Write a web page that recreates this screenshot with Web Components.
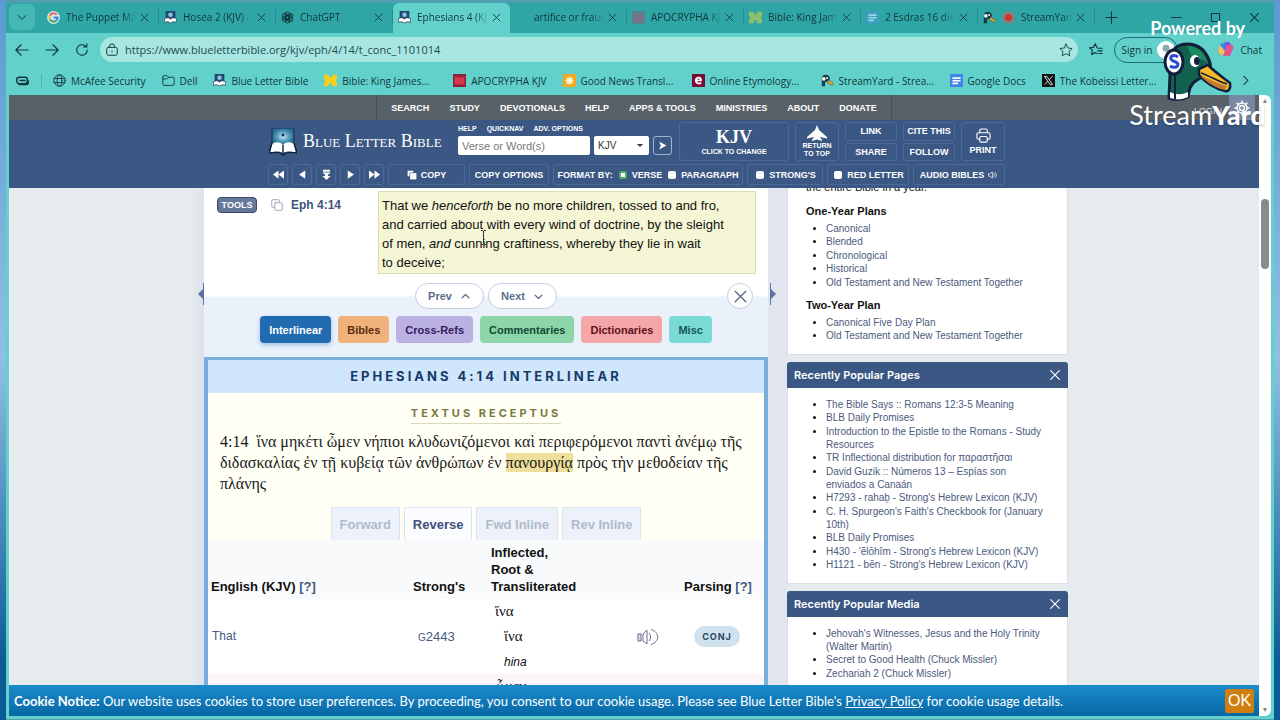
<!DOCTYPE html>
<html lang="en">
<head>
<meta charset="utf-8">
<meta name="viewport" content="width=device-width, initial-scale=1">
<title>Ephesians 4 (KJV) - Blue Letter Bible</title>
<style>
  html, body { height: 100%; margin: 0; }
  body {
    overflow: hidden;
    background: linear-gradient(#5b9ad0, #8fc0e4 50%, #0b5c96 92%);
    font-family: "Liberation Sans", Arial, sans-serif;
  }
</style>
</head>
<body>
<browser-window>
  <browser-tab slot="tabs" icon="google">The Puppet Mas</browser-tab>
  <browser-tab slot="tabs" icon="blb">Hosea 2 (KJV) - </browser-tab>
  <browser-tab slot="tabs" icon="chatgpt">ChatGPT</browser-tab>
  <browser-tab slot="tabs" icon="blb" active>Ephesians 4 (KJV)</browser-tab>
  <browser-tab slot="tabs" icon="none">artifice or fraud</browser-tab>
  <browser-tab slot="tabs" icon="apocDim">APOCRYPHA KJ</browser-tab>
  <browser-tab slot="tabs" icon="mDim">Bible: King Jame</browser-tab>
  <browser-tab slot="tabs" icon="docsDim">2 Esdras 16 disc</browser-tab>
  <browser-tab slot="tabs" icon="duck" recording>StreamYard</browser-tab>

  <bookmark-link slot="bookmarks" icon="globe">McAfee Security</bookmark-link>
  <bookmark-link slot="bookmarks" icon="folder">Dell</bookmark-link>
  <bookmark-link slot="bookmarks" icon="blb">Blue Letter Bible</bookmark-link>
  <bookmark-link slot="bookmarks" icon="m" wide>Bible: King James...</bookmark-link>
  <bookmark-link slot="bookmarks" icon="apoc">APOCRYPHA KJV</bookmark-link>
  <bookmark-link slot="bookmarks" icon="sun" wide>Good News Transl...</bookmark-link>
  <bookmark-link slot="bookmarks" icon="ety" wide>Online Etymology...</bookmark-link>
  <bookmark-link slot="bookmarks" icon="duck" wide>StreamYard - Strea...</bookmark-link>
  <bookmark-link slot="bookmarks" icon="docs">Google Docs</bookmark-link>
  <bookmark-link slot="bookmarks" icon="x" wide>The Kobeissi Letter...</bookmark-link>

  <bible-page>
    <verse-panel slot="main"></verse-panel>
    <interlinear-panel slot="main"></interlinear-panel>

    <side-card slot="side">
      <p>the entire Bible in a year.</p>
      <h4>One-Year Plans</h4>
      <ul>
        <li><a href="#">Canonical</a></li>
        <li><a href="#">Blended</a></li>
        <li><a href="#">Chronological</a></li>
        <li><a href="#">Historical</a></li>
        <li><a href="#">Old Testament and New Testament Together</a></li>
      </ul>
      <h4>Two-Year Plan</h4>
      <ul>
        <li><a href="#">Canonical Five Day Plan</a></li>
        <li><a href="#">Old Testament and New Testament Together</a></li>
      </ul>
    </side-card>
    <side-card slot="side" heading="Recently Popular Pages">
      <ul>
        <li><a href="#">The Bible Says :: Romans 12:3-5 Meaning</a></li>
        <li><a href="#">BLB Daily Promises</a></li>
        <li><a href="#">Introduction to the Epistle to the Romans - Study Resources</a></li>
        <li><a href="#">TR Inflectional distribution for παραστῆσαι</a></li>
        <li><a href="#">David Guzik :: Números 13 – Espías son enviados a Canaán</a></li>
        <li><a href="#">H7293 - rahaḇ - Strong's Hebrew Lexicon (KJV)</a></li>
        <li><a href="#">C. H. Spurgeon's Faith's Checkbook for (January 10th)</a></li>
        <li><a href="#">BLB Daily Promises</a></li>
        <li><a href="#">H430 - 'ĕlōhîm - Strong's Hebrew Lexicon (KJV)</a></li>
        <li><a href="#">H1121 - bēn - Strong's Hebrew Lexicon (KJV)</a></li>
      </ul>
    </side-card>
    <side-card slot="side" heading="Recently Popular Media">
      <ul>
        <li><a href="#">Jehovah's Witnesses, Jesus and the Holy Trinity (Walter Martin)</a></li>
        <li><a href="#">Secret to Good Health (Chuck Missler)</a></li>
        <li><a href="#">Zechariah 2 (Chuck Missler)</a></li>
      </ul>
    </side-card>
  </bible-page>
</browser-window>
<stream-badge></stream-badge>

<script>
const line = (body, w = 1.3) =>
  `<svg viewBox="0 0 16 16" fill="none" stroke="currentColor" stroke-width="${w}" stroke-linecap="round" stroke-linejoin="round">${body}</svg>`;
const fill = (body, box = "0 0 16 16") => `<svg viewBox="${box}" fill="currentColor">${body}</svg>`;

const castle = (bg, fg) => fill(`<rect width="16" height="16" fill="${bg}"/><path d="M2 3h3v2h2V3h2v2h2V3h3v10H2z" fill="${fg}"/>`);
const blockM = (c) => fill(`<path d="M0 1h5l3 4 3-4h5v5h-1v4h1v5h-6v-4H9l-1 2-1-2H6v4H0v-5h1V6H0z" fill="${c}"/>`);
const docs = (bg, fg) => fill(`<rect width="16" height="16" rx="1" fill="${bg}"/><path d="M3 4h10v2H3zM3 7.300h10v2H3zM3 10.600h7v2H3z" fill="${fg}"/>`);

const ICONS = {
  none: "",
  chevronDown: line(`<path d="M3 6l5 5 5-5"/>`),
  chevronUp: line(`<path d="M3 10l5-5 5 5"/>`, 2),
  chevronDownBold: line(`<path d="M3 6l5 5 5-5"/>`, 2),
  chevronRight: line(`<path d="M6 3l5 5-5 5"/>`),
  close: line(`<path d="M3 3l10 10M13 3L3 13"/>`),
  plus: line(`<path d="M8 1v14M1 8h14"/>`),
  minimize: line(`<path d="M2 8h12"/>`),
  maximize: line(`<rect x="3" y="3" width="10" height="10"/>`),
  back: line(`<path d="M15 8H1M7 2L1 8l6 6"/>`),
  forward: line(`<path d="M1 8h14M9 2l6 6-6 6"/>`),
  reload: line(`<path d="M14 8a6 6 0 1 1-2-4.500M13.500 1v3.500H10"/>`),
  lock: line(`<rect x="2" y="5" width="12" height="9" rx="2"/><path d="M5 5V4a3 3 0 0 1 6 0v1M8 9v1"/>`, 1.1),
  star: line(`<path d="M8 1.200l2.100 4.500 4.900.600-3.600 3.400.900 4.900L8 12.200l-4.300 2.400.900-4.900L1 6.300l4.900-.600z"/>`, 1),
  favorites: line(`<path d="M9 12l-2-1-4 2 .800-4.500L.700 5.500 5 5l2-4 2 4M10 6h5M10 9h5M11 12h4"/>`),
  sidebar: line(`<rect x="1" y="4" width="13" height="8" rx="3"/><path d="M5 8h6M4 13h9c2 0 2.500-2 2.500-4"/>`, 1.8),
  globe: line(`<circle cx="8" cy="8" r="7"/><ellipse cx="8" cy="8" rx="3" ry="7"/><path d="M1.500 5.500h13M1.500 10.500h13"/>`, 1.1),
  folder: line(`<path d="M1 3.500a1.500 1.500 0 0 1 1.500-1.500H6l2 2h5.500A1.500 1.500 0 0 1 15 5.500v7a1.500 1.500 0 0 1-1.500 1.500h-11A1.500 1.500 0 0 1 1 12.500zM1 6h5l2-2"/>`, 1.1),
  google: fill(`<circle cx="8" cy="8" r="8" fill="#cfe9ec"/><g fill="none" stroke-width="2.600"><path d="M12 4.500A5 5 0 0 0 3.500 6" stroke="#e06a5a"/><path d="M3.500 6a5 5 0 0 0 0 4" stroke="#edbd3f"/><path d="M3.500 10a5 5 0 0 0 8 1.700" stroke="#48a962"/><path d="M11.500 11.700A5 5 0 0 0 13 8H8" stroke="#4b82dc"/></g>`),
  blb: fill(`<rect x="2" y="0" width="12" height="11" fill="#1f4a73"/><circle cx="8" cy="4.500" r="2.800" fill="#8fc4dd"/><path d="M1 9c3-1 5-1 7 1 2-2 4-2 7-1l1 5c-3-1-6-1-8 1-2-2-5-2-8-1z" fill="#fff" stroke="#14263c" stroke-width=".8"/>`),
  chatgpt: line([0, 60, 120, 180, 240, 300].map((a) => `<ellipse cx="8" cy="5.500" rx="3" ry="4.500" transform="rotate(${a} 8 8)"/>`).join(""), 1.2),
  apoc: castle("#8f2038", "#d7394c"),
  apocDim: castle("#5a7f92", "#7f7088"),
  m: blockM("#f7cf1c"),
  mDim: blockM("#8ec069"),
  docs: docs("#4285e8", "#fff"),
  docsDim: docs("#3ba0bd", "#9bd6df"),
  sun: fill(`<rect width="16" height="16" rx="1" fill="#f3a91d"/><path d="M8 2l1.300 3.200L12.500 4 11.200 7 14 8.300l-2.900 1L12.400 12.500 9.300 11.200 8 14l-1.300-2.800L3.500 12.500 4.800 9.300 2 8.300 4.800 7 3.500 4l3.200 1.200z" fill="#fff6d6"/>`),
  ety: fill(`<rect width="16" height="16" rx="1" fill="#790b35"/><path d="M12.200 8.800H6.300c.300 1.600 2.700 2 4.700.900l.800 2.200c-4 2.100-8.300.300-8.300-3.900 0-6.300 9.700-6.300 8.700.800zM6.300 6.900h3.300c-.2-1.800-2.900-1.800-3.300 0z" fill="#fff"/>`),
  x: fill(`<rect width="16" height="16" fill="#101214"/><path d="M3 3h3l7 10h-3z" fill="none" stroke="#fff"/><path d="M12.500 3L9 7M3.500 13L7 9" stroke="#fff"/>`),
  duck: fill(`<path d="M1 6c0-3 2-5 5-5 3 0 4 2 5 4l-1 3-5 2v5H1z" fill="#153b45"/><circle cx="3.500" cy="6" r="2.200" fill="#fff"/><circle cx="7.500" cy="5" r="1.200" fill="#fff"/><path d="M9 7l7 5-2 2-6-3z" fill="#e4ad2c" stroke="#153b45" stroke-width=".6"/>`),
  copilot: fill(`<path d="M4 2h6l-3 11H4C1 13 0 11 1 8z" fill="#2d8ee8"/><path d="M1.500 7L3 4l5 6-2 3H4c-2.500 0-3.500-2-2.500-6z" fill="#f1c453"/><path d="M12 14H6l3-11h3c3 0 4 2 3 5z" fill="#e2568f"/><path d="M7 1h3.500c1.500 0 2 1 2.500 3H9L7.500 9z" fill="#7359e0"/>`),
  printer: line(`<path d="M4 5V2.500A1.500 1.500 0 0 1 5.500 1h5A1.500 1.500 0 0 1 12 2.500V5M4 12H2.500A1.500 1.500 0 0 1 1 10.500V7a2 2 0 0 1 2-2h10a2 2 0 0 1 2 2v3.500a1.500 1.500 0 0 1-1.500 1.500H12"/><rect x="4" y="9" width="8" height="6" rx="1.500"/>`, 1.2),
  plane: fill(`<path d="M10 0l2 5 8 7v1.500l-7-1.500 2 3v1l-5-1.500L5 16v-1l2-3-7 1.500V12l8-7z"/>`, "0 0 20 16"),
  first: fill(`<path d="M8 2v12L0 8zM16 2v12L8 8z"/>`),
  prev: fill(`<path d="M12 2v12L3 8z"/>`),
  down2: fill(`<path d="M3 1h10v3H3z"/><path d="M2 5h12L8 10z"/><path d="M6 8h4v2h4l-6 6-6-6h4z"/>`),
  next: fill(`<path d="M4 2v12l9-6z"/>`),
  last: fill(`<path d="M0 2v12l8-6zM8 2v12l8-6z"/>`),
  copySolid: fill(`<path d="M1 1h9v3H4v6H1z"/><path d="M5 5h10v10H5z"/>`),
  copy: line(`<path d="M4 11H2a1 1 0 0 1-1-1V2a1 1 0 0 1 1-1h8a1 1 0 0 1 1 1v2"/><rect x="5" y="5" width="10" height="10" rx="1"/>`, 1.1),
  go: fill(`<path d="M2 1l13 7-13 7 3-7z"/>`),
  sound: line(`<path d="M1 6v4h2l4 3V3L3 6zM9 5.500c1.500 1.500 1.500 3.500 0 5M11.500 3.500c2.500 2.500 2.500 6.500 0 9"/>`, 1.1),
  speaker: `<svg viewBox="0 0 22 18" fill="none" stroke="#6d6f8c"><rect x="1" y="6" width="3" height="7" fill="#dfe0ea"/><path d="M6 6l4-4v14l-4-3zM12 5c2 2.500 2 5.500 0 8M14 1.500c9 3 9 12 0 15"/></svg>`,
  gear: line(`<circle cx="8" cy="8" r="2.500"/><circle cx="8" cy="8" r="5"/><path d="M8 1v2M8 13v2M1 8h2M13 8h2M3 3l1.500 1.500M11.500 11.500L13 13M13 3l-1.500 1.500M4.500 11.500L3 13"/>`, 1.4),
  book: `<svg viewBox="0 0 28 28"><defs><radialGradient id="sky"><stop offset="0" stop-color="#cdeaf0"/><stop offset=".5" stop-color="#5ea3c3"/><stop offset="1" stop-color="#2b6a92"/></radialGradient></defs><rect x="3" y="0" width="22" height="17" fill="url(#sky)" stroke="#14304f"/><circle cx="14" cy="7" r="1.500" fill="#17304c"/><path d="M3 16c4-3 9-2 11 1 2-3 7-4 11-1l2 9c-5-2-10-2-13 0-3-2-8-2-13 0z" fill="#fff"/><path d="M3 15L0 25c5-1 11-1 14 2 3-3 9-3 14-2l-3-10M14 17v8" fill="none" stroke="#0f2138" stroke-width="1.400"/></svg>`,
};

class UiIcon extends HTMLElement {
  constructor() {
    super();
    this.attachShadow({ mode: "open" });
  }

  connectedCallback() {
    this.shadowRoot.innerHTML = `
      <style>
        :host { display: block; flex: none; width: 13px; height: 13px; }
        svg { display: block; width: 100%; height: 100%; }
      </style>
      ${ICONS[this.getAttribute("name")] || ""}
    `;
  }
}

class BrowserTab extends HTMLElement {
  constructor() {
    super();
    this.attachShadow({ mode: "open" });
  }

  connectedCallback() {
    this.shadowRoot.innerHTML = `
      <style>
        :host {
          display: flex;
          align-items: center;
          gap: 6px;
          flex: 0 1 117px;
          min-width: 0;
          box-sizing: border-box;
          padding: 0 8px 0 5px;
          border-right: 1px solid #228c8f;
          margin: 6px 0 8px;
        }
        :host([active]) {
          margin: 0;
          padding-bottom: 2px;
          background: #62d1cc;
          border-radius: 6px 6px 0 0;
          border-right: 0;
        }
        .title {
          flex: 1;
          overflow: hidden;
          white-space: nowrap;
          line-height: 16px;
          -webkit-mask-image: linear-gradient(90deg, #000 82%, transparent);
          mask-image: linear-gradient(90deg, #000 82%, transparent);
        }
        .rec { flex: none; width: 7px; height: 7px; border-radius: 50%; background: #d8312c; border: 3px solid #7c8583; }
        button { all: unset; color: #12393d; margin-left: -3px; }
        button ui-icon { width: 11px; height: 11px; }
      </style>
      <ui-icon name="${this.getAttribute("icon")}"></ui-icon>
      ${this.hasAttribute("recording") ? `<span class="rec"></span>` : ""}
      <span class="title"><slot></slot></span>
      <button type="button" aria-label="Close tab"><ui-icon name="close"></ui-icon></button>
    `;
  }
}

class BookmarkLink extends HTMLElement {
  constructor() {
    super();
    this.attachShadow({ mode: "open" });
  }

  connectedCallback() {
    this.shadowRoot.innerHTML = `
      <style>
        :host { display: block; flex: none; }
        :host([wide]) { width: 113px; }
        a { display: flex; align-items: center; gap: 5px; color: inherit; text-decoration: none; white-space: nowrap; }
      </style>
      <a href="#"><ui-icon name="${this.getAttribute("icon")}"></ui-icon><span><slot></slot></span></a>
    `;
  }
}

class BrowserWindow extends HTMLElement {
  constructor() {
    super();
    this.attachShadow({ mode: "open" });
  }

  connectedCallback() {
    this.shadowRoot.innerHTML = `
      <style>
        :host {
          display: flex;
          flex-direction: column;
          height: 100vh;
          box-sizing: border-box;
          margin: 0 6px;
          padding: 3px 0 1px;
          color: #10373b;
          font-family: "Open Sans", "Noto Sans", sans-serif;
          font-size: 10px;
          background: #4f9fb0;
        }
        button { all: unset; display: block; }
        .strip { display: flex; height: 30px; flex: none; background: #2fa5a5; }
        .search { margin: 1px 7px 3px 3px; padding: 7px 7px; border-radius: 6px; background: #45b7b5; }
        .search ui-icon { width: 12px; height: 12px; }
        .plus { margin: 7px 10px 9px; }
        .win { display: flex; gap: 26px; margin: 7px 13px 9px auto; }
        .bar { background: #62d1cc; flex: none; }
        .address { display: flex; align-items: center; height: 33px; padding: 0 12px 0 9px; gap: 11px; }
        .address ui-icon { width: 14px; height: 14px; }
        .history { display: flex; gap: 16px; }
        .url {
          flex: 1;
          display: flex;
          align-items: center;
          gap: 6px;
          height: 25px;
          padding: 0 5px;
          border-radius: 13px;
          background: #a8e6e2;
        }
        .url input { all: unset; flex: 1; font-size: 11px; color: #234c50; }
        .signin {
          display: flex;
          align-items: center;
          gap: 5px;
          height: 24px;
          padding: 0 2px 0 7px;
          border: 1px solid #1f6d70;
          border-radius: 13px;
        }
        .signin i { width: 18px; height: 18px; border-radius: 50%; background: radial-gradient(circle at 50% 40%, #8aa 3px, #fff 4px); }
        .chat { display: flex; align-items: center; gap: 6px; margin-left: 28px; }
        .chat ui-icon { width: 17px; height: 17px; }
        .marks { display: flex; align-items: center; height: 29px; gap: 16px; padding: 0 22px 0 10px; }
        .marks .pin { padding-right: 12px; border-right: 1px solid #48b3b2; margin-right: -5px; }
        .marks .more { margin-left: auto; }
        .body { flex: 1; min-height: 0; display: flex; background: #62d1cc; padding: 0 3px 3px; }
        .body > slot { display: block; flex: 1; min-width: 0; }
        .scroll {
          width: 12px;
          display: flex;
          flex-direction: column;
          align-items: center;
          background: #fff;
          border-radius: 0 6px 6px 0;
          font-size: 7px;
          color: #888;
          line-height: 12px;
        }
        .thumb { width: 8px; height: 70px; margin: 92px 0 auto; border-radius: 4px; background: #8b8b8b; }
      </style>
      <div class="strip">
        <button class="search" type="button" aria-label="Search tabs"><ui-icon name="chevronDown"></ui-icon></button>
        <slot name="tabs"></slot>
        <button class="plus" type="button" aria-label="New tab"><ui-icon name="plus"></ui-icon></button>
        <div class="win">
          <button type="button" aria-label="Minimize"><ui-icon name="minimize"></ui-icon></button>
          <button type="button" aria-label="Maximize"><ui-icon name="maximize"></ui-icon></button>
          <button type="button" aria-label="Close"><ui-icon name="close"></ui-icon></button>
        </div>
      </div>
      <div class="bar">
        <div class="address">
          <div class="history">
            <button type="button" aria-label="Back"><ui-icon name="back"></ui-icon></button>
            <button type="button" aria-label="Forward"><ui-icon name="forward"></ui-icon></button>
            <button type="button" aria-label="Reload"><ui-icon name="reload"></ui-icon></button>
          </div>
          <div class="url">
            <ui-icon name="lock"></ui-icon>
            <input type="text" aria-label="Address" value="https://www.blueletterbible.org/kjv/eph/4/14/t_conc_1101014">
            <button type="button" aria-label="Add to favorites"><ui-icon name="star"></ui-icon></button>
          </div>
          <button type="button" aria-label="Favorites"><ui-icon name="favorites"></ui-icon></button>
          <button class="signin" type="button">Sign in <i></i></button>
          <button class="chat" type="button"><ui-icon name="copilot"></ui-icon>Chat</button>
        </div>
        <div class="marks">
          <div class="pin"><ui-icon name="sidebar"></ui-icon></div>
          <slot name="bookmarks"></slot>
          <button class="more" type="button" aria-label="More bookmarks"><ui-icon name="chevronRight"></ui-icon></button>
        </div>
      </div>
      <div class="body">
        <slot></slot>
        <div class="scroll"><span>▲</span><div class="thumb"></div><span>▼</span></div>
      </div>
    `;
  }
}

class BibleHeader extends HTMLElement {
  constructor() {
    super();
    this.attachShadow({ mode: "open" });
  }

  connectedCallback() {
    const menu = ["SEARCH", "STUDY", "DEVOTIONALS", "HELP", "APPS & TOOLS", "MINISTRIES", "ABOUT", "DONATE"];
    this.shadowRoot.innerHTML = `
      <style>
        :host { display: block; flex: none; color: #fff; font-size: 9px; font-weight: 700; }
        a { color: inherit; text-decoration: none; }
        .menu { display: grid; grid-template-columns: 1fr auto 1fr; height: 25px; background: #596168; }
        nav { display: flex; align-items: center; gap: 20px; padding: 0 14px; grid-column: 2; border: solid #474d55; border-width: 0 1px; }
        .account { display: flex; justify-content: flex-end; align-items: stretch; gap: 7px; padding-right: 4px; }
        .account a { align-self: center; margin-top: 6px; font-weight: 400; color: #dde; }
        .account button { background: #7888a4; padding: 0 5px; }
        .account ui-icon { width: 16px; height: 16px; }
        .tools { background: #3b5884; padding: 2px 0 3px; }
        .row { display: flex; width: 742px; max-width: 100%; box-sizing: border-box; padding-left: 5px; margin: 0 auto; }
        .row.top { height: 39px; gap: 6px; margin-bottom: 3px; }
        .row.low { height: 21px; gap: 4px; }
        button, .group {
          font: inherit;
          color: inherit;
          box-sizing: border-box;
          display: flex;
          align-items: center;
          justify-content: center;
          gap: 4px;
          margin: 0;
          padding: 0;
          white-space: nowrap;
          background: none;
          border: 1px solid #4a6a9a;
          border-radius: 3px;
        }
        .account button { border: 0; border-radius: 0; }
        .brand { flex: 0 0 184px; display: flex; align-items: center; gap: 6px; padding-left: 1px; box-sizing: border-box; }
        .brand ui-icon { width: 28px; height: 28px; }
        .brand span { font: 18px "Liberation Serif", serif; font-variant: small-caps; white-space: nowrap; }
        .find { flex: 0 0 215px; }
        .quick { display: flex; gap: 10px; font-size: 7px; line-height: 11px; padding-top: 1px; }
        .form { display: flex; gap: 4px; margin-top: 2px; height: 19px; }
        .form input, .form select {
          box-sizing: border-box;
          border: 0;
          border-radius: 2px;
          background: #fff;
          font: 10px "Liberation Sans", Arial, sans-serif;
          color: #333;
          padding: 0 4px;
          margin: 0;
        }
        .form input { width: 132px; font-size: 11px; }
        .form input::placeholder { color: #777; }
        .form select { width: 55px; appearance: none; }
        .pick { display: flex; position: relative; }
        .pick::after {
          content: "";
          position: absolute;
          right: 6px;
          top: 8px;
          border: 3px solid transparent;
          border-top-color: #333;
        }
        .form button { width: 19px; border-color: #9fb3d2; }
        .form ui-icon { width: 9px; height: 9px; }
        .col { flex-direction: column; gap: 2px; font-size: 7px; line-height: 8px; }
        .version { flex: 0 0 110px; gap: 2px; }
        .version b { font: 700 18px/18px "Liberation Serif", serif; }
        .top-link { flex: 0 0 44px; gap: 1px; font-size: 7px; }
        .top-link ui-icon { width: 20px; height: 16px; }
        .pair { flex: 0 0 52px; display: grid; grid-template-rows: 1fr 1fr; gap: 2px; }
        .print { flex: 0 0 44px; font-size: 9px; line-height: 10px; }
        .print ui-icon { width: 17px; height: 15px; }
        .step { flex: 0 0 20px; }
        .step ui-icon { width: 11px; height: 11px; }
        .low > .copy { flex: 0 0 77px; }
        .copy ui-icon, .audio ui-icon { width: 10px; height: 10px; }
        .options { flex: 0 0 80px; }
        .format { flex: 0 0 190px; }
        .strongs { flex: 0 0 76px; }
        .red { flex: 0 0 82px; }
        .audio { flex: 0 0 92px; }
        label { display: flex; align-items: center; gap: 5px; }
        label input {
          appearance: none;
          box-sizing: border-box;
          margin: 0 0 0 2px;
          width: 8px;
          height: 8px;
          border-radius: 2px;
          background: #fff;
        }
        label input:checked { border: 2px solid #48ad62; }
      </style>
      <div class="menu">
        <nav>${menu.map((m) => `<a href="#">${m.replace("&", "&amp;")}</a>`).join("")}</nav>
        <div class="account">
          <a href="#">LOGIN</a>
          <button type="button" aria-label="Settings"><ui-icon name="gear"></ui-icon></button>
        </div>
      </div>
      <div class="tools">
        <div class="row top">
          <a class="brand" href="#"><ui-icon name="book"></ui-icon><span>Blue Letter Bible</span></a>
          <div class="find">
            <div class="quick"><a href="#">HELP</a><a href="#">QUICKNAV</a><a href="#">ADV. OPTIONS</a></div>
            <div class="form">
              <input type="text" placeholder="Verse or Word(s)" aria-label="Verse or Word(s)">
              <div class="pick"><select aria-label="Version"><option>KJV</option></select></div>
              <button type="button" aria-label="Go"><ui-icon name="go"></ui-icon></button>
            </div>
          </div>
          <button class="col version" type="button"><b>KJV</b>CLICK TO CHANGE</button>
          <button class="col top-link" type="button"><ui-icon name="plane"></ui-icon><span>RETURN<br>TO TOP</span></button>
          <div class="pair"><button type="button">LINK</button><button type="button">SHARE</button></div>
          <div class="pair"><button type="button">CITE THIS</button><button type="button">FOLLOW</button></div>
          <button class="col print" type="button"><ui-icon name="printer"></ui-icon>PRINT</button>
        </div>
        <div class="row low">
          ${["first", "prev", "down2", "next", "last"].map((n) => `<button class="step" type="button" aria-label="${n}"><ui-icon name="${n}"></ui-icon></button>`).join("")}
          <button class="copy" type="button"><ui-icon name="copySolid"></ui-icon>COPY</button>
          <button class="options" type="button">COPY OPTIONS</button>
          <div class="group format">FORMAT BY:
            <label><input type="checkbox" checked>VERSE</label>
            <label><input type="checkbox">PARAGRAPH</label>
          </div>
          <div class="group strongs"><label><input type="checkbox">STRONG'S</label></div>
          <div class="group red"><label><input type="checkbox">RED LETTER</label></div>
          <button class="audio" type="button">AUDIO BIBLES <ui-icon name="sound"></ui-icon></button>
        </div>
      </div>
    `;
  }
}

class CookieNotice extends HTMLElement {
  constructor() {
    super();
    this.attachShadow({ mode: "open" });
  }

  connectedCallback() {
    this.shadowRoot.innerHTML = `
      <style>
        :host {
          display: flex;
          flex: none;
          align-items: center;
          justify-content: space-between;
          height: 31px;
          padding: 0 5px;
          color: #fff;
          background: linear-gradient(#1b8bcc, #0767a5);
          font: 13px Lato, "Open Sans", sans-serif;
          white-space: nowrap;
        }
        a { color: inherit; }
        button { width: 29px; height: 24px; padding: 0; border: 0; border-radius: 2px; background: #cf7f12; color: #fff; font: 16px/24px "Liberation Sans", sans-serif; }
      </style>
      <span><b>Cookie Notice:</b> Our website uses cookies to store user preferences. By proceeding, you consent to our cookie usage. Please see Blue Letter Bible's <a href="#">Privacy Policy</a> for cookie usage details.</span>
      <button type="button">OK</button>
    `;
  }
}

class BiblePage extends HTMLElement {
  constructor() {
    super();
    this.attachShadow({ mode: "open" });
  }

  connectedCallback() {
    this.shadowRoot.innerHTML = `
      <style>
        :host { display: flex; flex-direction: column; height: 100%; background: #e6ebef; color: #111; font-family: "Liberation Sans", Arial, sans-serif; }
        .content { flex: 1; min-height: 0; overflow: hidden; }
        .columns { display: flex; width: 868px; max-width: 100%; margin: 0 auto; padding-left: 4px; box-sizing: border-box; }
        .main { flex: 1; min-width: 0; background: #fff; box-shadow: -6px 0 8px #dbe2ec; }
        .side { flex: 0 0 281px; display: flex; flex-direction: column; gap: 7px; }
        .gutter { flex: none; width: 19px; background: #e0e5f0; position: relative; }
        .handle { position: absolute; top: 95px; height: 22px; display: flex; align-items: center; }
        .handle::before { content: ""; border: 5px solid transparent; }
        .right { left: 2px; border-left: 1px solid #5b74a3; }
        .right::before { border-left-color: #5b74a3; border-right: 0; }
        .left { right: 583px; border-right: 1px solid #5b74a3; }
        .left::before { border-right-color: #5b74a3; border-left: 0; }
      </style>
      <bible-header></bible-header>
      <div class="content">
        <div class="columns">
          <div class="main"><slot name="main"></slot></div>
          <div class="gutter"><span class="handle left"></span><span class="handle right"></span></div>
          <div class="side"><slot name="side"></slot></div>
        </div>
      </div>
      <cookie-notice></cookie-notice>
    `;
  }
}

class VersePanel extends HTMLElement {
  constructor() {
    super();
    this.attachShadow({ mode: "open" });
  }

  connectedCallback() {
    this.shadowRoot.innerHTML = `
      <style>
        :host { display: block; }
        a { color: #40537b; text-decoration: none; }
        button { font: inherit; margin: 0; padding: 0; }
        .verse { display: flex; align-items: flex-start; padding: 3px 12px 9px 13px; }
        .ref { flex: 0 0 161px; display: flex; align-items: center; padding-top: 6px; font-size: 12px; font-weight: 700; }
        .ref button { width: 40px; height: 16px; border: 1px solid #3c4866; border-radius: 4px; background: #68789b; color: #fff; font-size: 9px; font-weight: 700; }
        .ref ui-icon { color: #8b94a8; margin: 0 8px 0 14px; width: 12px; height: 12px; }
        .text {
          flex: 1;
          position: relative;
          padding: 4px 3px 1px;
          border: 1px solid #dcdcb2;
          background: #f5f6d5;
          font-size: 13px;
          line-height: 19px;
          margin: 0;
        }
        .text svg { position: absolute; left: 101px; top: 38px; width: 7px; height: 15px; }
        .tools { background: linear-gradient(#fff 13px, #eaf1fb 14px); padding-bottom: 14px; }
        .steps { display: grid; grid-template-columns: 1fr auto auto 1fr; gap: 4px; padding: 0 15px; color: #5d6b8c; font-size: 11px; font-weight: 700; }
        .steps button {
          display: flex;
          align-items: center;
          justify-content: center;
          gap: 8px;
          height: 26px;
          width: 69px;
          box-sizing: border-box;
          border: 1px solid #c6cde0;
          border-radius: 13px;
          background: #fff;
          color: inherit;
        }
        .steps button ui-icon { width: 11px; height: 11px; }
        .steps .open { grid-column: 2; }
        .steps .close { width: 26px; justify-self: end; }
        .steps .close ui-icon { width: 17px; height: 17px; }
        .kinds { display: flex; justify-content: center; gap: 7px; margin-top: 7px; font-size: 11px; font-weight: 700; }
        .kinds button { height: 27px; padding: 0 9px; border: 0; border-radius: 4px; }
      </style>
      <div class="verse">
        <div class="ref">
          <button type="button">TOOLS</button>
          <ui-icon name="copy"></ui-icon>
          <a href="#">Eph 4:14</a>
        </div>
        <p class="text">That we <i>henceforth</i> be no more children, tossed to and fro,<br>and carried about with every wind of doctrine, by the sleight<br>of men, <i>and</i> cunning craftiness, whereby they lie in wait<br>to deceive;
          <svg viewBox="0 0 7 15" fill="none" stroke="#333"><path d="M1 .500h2M4 .500h2M1 14.500h2M4 14.500h2M3.500 1v13"/></svg>
        </p>
      </div>
      <div class="tools">
        <div class="steps">
          <button class="open" type="button">Prev <ui-icon name="chevronUp"></ui-icon></button>
          <button type="button">Next <ui-icon name="chevronDownBold"></ui-icon></button>
          <button class="close" type="button" aria-label="Close"><ui-icon name="close"></ui-icon></button>
        </div>
        <div class="kinds">
          <button type="button" style="background:#216bb0;color:#fff;box-shadow:0 2px 5px #9fc0e6">Interlinear</button>
          <button type="button" style="background:#efb27a;color:#5c2a0c">Bibles</button>
          <button type="button" style="background:#bcb1e3;color:#33205f">Cross-Refs</button>
          <button type="button" style="background:#8dd6a9;color:#124a33">Commentaries</button>
          <button type="button" style="background:#f5a6a8;color:#5e1220">Dictionaries</button>
          <button type="button" style="background:#7adbd5;color:#17555a">Misc</button>
        </div>
      </div>
    `;
  }
}

class InterlinearPanel extends HTMLElement {
  constructor() {
    super();
    this.attachShadow({ mode: "open" });
  }

  connectedCallback() {
    this.shadowRoot.innerHTML = `
      <style>
        :host { display: block; border: 4px solid #79afdc; border-top-width: 3px; background: #fff; }
        a { color: #46597f; text-decoration: none; }
        h2, h3 { margin: 0; font-family: Inter, sans-serif; text-align: center; }
        h2 { font-size: 13px; line-height: 33px; letter-spacing: 3px; color: #163a66; background: #cfe6fc; }
        .original { background: #fffff6; padding: 11px 12px 0; }
        h3 { width: max-content; margin: 0 auto; font-size: 11px; line-height: 19px; letter-spacing: 3px; color: #77783f; border-bottom: 1px solid #d9d9c0; }
        .greek { margin: 7px 0 0; font: 16px/21px "Liberation Serif", "DejaVu Serif", serif; color: #1a1a1a; }
        mark { background: #eee09a; color: inherit; padding: 1px 0; }
        .modes { display: flex; justify-content: center; gap: 4px; margin-top: 13px; }
        .modes button {
          height: 33px;
          padding: 0 8px;
          margin: 0;
          border: 1px solid #dce4ef;
          border-bottom: 0;
          background: #edf2fa;
          color: #b0bacb;
          font: 700 13px "Liberation Sans", sans-serif;
        }
        .modes .on { background: #fbfcff; color: #40507a; }
        table { width: 100%; border-collapse: collapse; font-size: 12px; table-layout: fixed; }
        th { text-align: left; vertical-align: bottom; font-size: 13px; line-height: 17px; padding: 4px 3px; background: #f8fafb; }
        td { padding: 0 4px; line-height: 25px; }
        td.num { font-size: 13px; padding-left: 8px; }
        td small { font-size: 10px; }
        .forms { font: 15px/25px "Liberation Serif", serif; padding: 0 7px; }
        .forms div + div { padding-left: 9px; }
        .forms em { font: italic 12px "Liberation Sans", sans-serif; }
        tr.alt td { background: #fcf5f8; }
        td ui-icon { width: 22px; height: 18px; }
        .conj { display: block; width: 46px; height: 21px; margin: 0 0 0 9px; padding: 0; border: 0; border-radius: 11px; background: #cfe2ee; color: #2c4560; font: 700 9px/21px Inter, sans-serif; letter-spacing: 1px; }
      </style>
      <h2>EPHESIANS 4:14 INTERLINEAR</h2>
      <div class="original">
        <h3>TEXTUS RECEPTUS</h3>
        <p class="greek">4:14 &nbsp;ἵνα μηκέτι ὦμεν νήπιοι κλυδωνιζόμενοι καὶ περιφερόμενοι παντὶ ἀνέμῳ τῆς<br>διδασκαλίας ἐν τῇ κυβείᾳ τῶν ἀνθρώπων ἐν <mark>πανουργίᾳ</mark> πρὸς τὴν μεθοδείαν τῆς<br>πλάνης</p>
        <div class="modes">
          <button type="button">Forward</button>
          <button class="on" type="button">Reverse</button>
          <button type="button">Fwd Inline</button>
          <button type="button">Rev Inline</button>
        </div>
      </div>
      <table>
        <colgroup><col style="width:202px"><col style="width:78px"><col style="width:145px"><col style="width:48px"><col></colgroup>
        <thead>
          <tr>
            <th>English (KJV) <a href="#">[?]</a></th>
            <th>Strong's</th>
            <th>Inflected,<br>Root &amp;<br>Transliterated</th>
            <th></th>
            <th>Parsing <a href="#">[?]</a></th>
          </tr>
        </thead>
        <tbody>
          <tr>
            <td><a href="#">That</a></td>
            <td class="num"><a href="#"><small>G</small>2443</a></td>
            <td class="forms"><div>ἵνα</div><div>ἵνα</div><div><em>hina</em></div></td>
            <td><ui-icon name="speaker"></ui-icon></td>
            <td><button class="conj" type="button">CONJ</button></td>
          </tr>
          <tr class="alt">
            <td></td>
            <td></td>
            <td class="forms"><div>ὦμεν</div></td>
            <td></td>
            <td></td>
          </tr>
        </tbody>
      </table>
    `;
  }
}

class SideCard extends HTMLElement {
  constructor() {
    super();
    this.attachShadow({ mode: "open" });
  }

  connectedCallback() {
    const heading = this.getAttribute("heading");
    this.shadowRoot.innerHTML = `
      <style>
        :host { display: block; background: #fff; border: 1px solid #dadfe6; border-top: 0; border-radius: 3px 3px 0 0; box-sizing: border-box; font-size: 10px; }
        header { display: flex; align-items: center; justify-content: space-between; height: 26px; padding: 0 6px 0 7px; margin: 0 -1px; background: #3b5884; border-radius: 3px 3px 0 0; color: #fff; font: 600 11px Inter, sans-serif; }
        header button { all: unset; }
        header ui-icon { width: 14px; height: 14px; }
        .body { padding: 10px 20px 10px 18px; }
        .plain { padding-top: 0; }
        ::slotted(p) { margin: -8px 0 0; font-size: 11px; line-height: 15px; }
        ::slotted(h4) { margin: 10px 0 4px; font-size: 11px; line-height: 13px; }
        ::slotted(ul) { margin: 0 0 2px; padding-left: 20px; line-height: 13px; }
      </style>
      ${heading ? `<header>${heading}<button type="button" aria-label="Close"><ui-icon name="close"></ui-icon></button></header>` : ""}
      <div class="body ${heading ? "" : "plain"}"><slot></slot></div>
    `;
    this.querySelectorAll("a").forEach((a) => {
      a.style.cssText = "color:#4c5a7c;text-decoration:none";
    });
    // every second entry gets a pixel more air
    this.querySelectorAll("li:nth-child(even)").forEach((li) => {
      li.style.marginBottom = "1px";
    });
  }
}

// Overlay of the broadcast, floats above the browser window
class StreamBadge extends HTMLElement {
  constructor() {
    super();
    this.attachShadow({ mode: "open" });
  }

  connectedCallback() {
    this.shadowRoot.innerHTML = `
      <style>
        :host { position: absolute; top: 18px; right: 14px; display: flex; flex-direction: column; align-items: center; color: #fff; font-family: Lato, "Open Sans", sans-serif; pointer-events: none; }
        .by { font-size: 18px; line-height: 21px; font-weight: 700; }
        svg { width: 70px; height: 60px; margin: 2px 0 0; }
        .name { font-size: 27px; line-height: 28px; font-weight: 400; text-shadow: 0 1px 2px #0004; }
        .name b { font-weight: 900; }
      </style>
      <span class="by">Powered by</span>
      <svg viewBox="0 0 70 60">
        <path d="M6 57l1-24C1 14 12 3 24 3c13 0 20 9 23 19 2 8-4 13-13 17-7 4-8 10-9 17-6 3-13 3-19 1z" fill="#12614f" stroke="#101f3a" stroke-width="3"/>
        <path d="M24 5c12 0 18 8 21 18-4-6-10-6-14-3z" fill="#1c8a63"/>
        <path d="M7 51c6 3 12 3 18 0v5c-6 3-12 3-18 1z" fill="#fff"/>
        <path d="M12 32v26" stroke="#101f3a" stroke-width="2"/>
        <path d="M36 28c4-2 7-3 9-4 8 8 16 13 22 18 1 5-1 9-5 8-9-2-19-8-26-16z" fill="#f7ba2a" stroke="#101f3a" stroke-width="2.500"/>
        <path d="M37 34c9 4 16 8 27 11-1 3-3 4-6 3-9-3-16-8-21-14z" fill="#c47a35"/>
        <path d="M38 32c9 3 16 8 26 11" fill="none" stroke="#101f3a" stroke-width="1.500"/>
        <ellipse cx="32" cy="20" rx="5" ry="6" fill="#fff"/><ellipse cx="34" cy="20" rx="3" ry="4" fill="#101f3a"/>
        <ellipse cx="11" cy="21" rx="9" ry="12" fill="#fff" stroke="#101f3a" stroke-width="3"/>
        <path d="M15 16c-4-3-8-1-7 2 1 3 6 2 7 5 0 4-5 4-8 2" fill="none" stroke="#2b4bd0" stroke-width="3"/>
      </svg>
      <span class="name">Stream<b>Yard</b></span>
    `;
  }
}

const registry = {
  "ui-icon": UiIcon,
  "browser-tab": BrowserTab,
  "bookmark-link": BookmarkLink,
  "bible-header": BibleHeader,
  "cookie-notice": CookieNotice,
  "side-card": SideCard,
  "verse-panel": VersePanel,
  "interlinear-panel": InterlinearPanel,
  "bible-page": BiblePage,
  "browser-window": BrowserWindow,
  "stream-badge": StreamBadge,
};

for (const [name, cls] of Object.entries(registry)) {
  if (!customElements.get(name)) customElements.define(name, cls);
}
</script>
</body>
</html>
